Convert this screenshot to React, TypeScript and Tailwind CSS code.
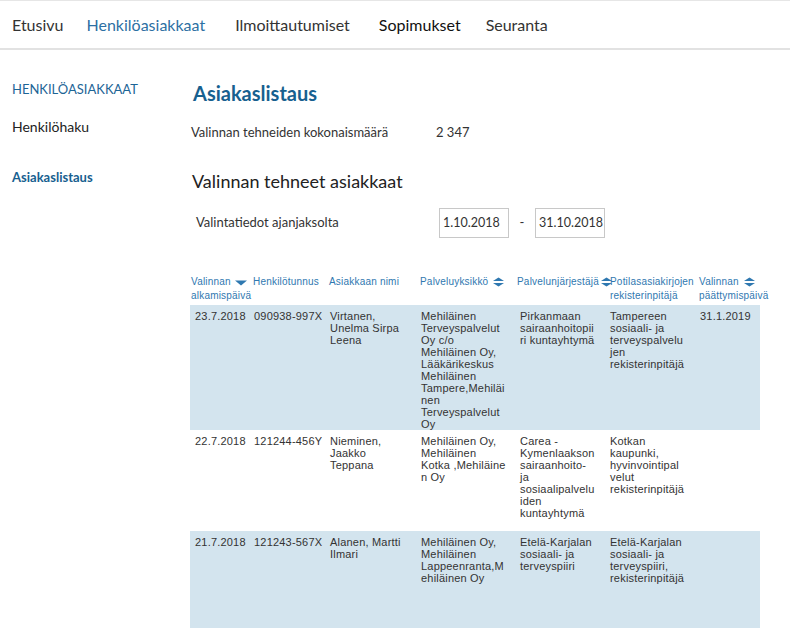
import React from "react";

const navItems = [
  { label: "Etusivu", cls: "text-[#333]" },
  { label: "Henkilöasiakkaat", cls: "ml-[23px] text-[#2d70a3]" },
  { label: "Ilmoittautumiset", cls: "ml-[30px] text-[#333]" },
  { label: "Sopimukset", cls: "ml-[29px] text-[#111]" },
  { label: "Seuranta", cls: "ml-[25px] text-[#333]" },
];

type Sort = "down" | "both" | null;

const columns: { lines: string[]; sort: Sort }[] = [
  { lines: ["Valinnan", "alkamispäivä"], sort: "down" },
  { lines: ["Henkilötunnus"], sort: null },
  { lines: ["Asiakkaan nimi"], sort: null },
  { lines: ["Palveluyksikkö"], sort: "both" },
  { lines: ["Palvelunjärjestäjä"], sort: "both" },
  { lines: ["Potilasasiakirjojen", "rekisterinpitäjä"], sort: null },
  { lines: ["Valinnan", "päättymispäivä"], sort: "both" },
];

const rows: { shade: boolean; h: string; cells: string[][] }[] = [
  {
    shade: true,
    h: "h-[125px]",
    cells: [
      ["23.7.2018"],
      ["090938-997X"],
      ["Virtanen,", "Unelma Sirpa", "Leena"],
      [
        "Mehiläinen",
        "Terveyspalvelut",
        "Oy c/o",
        "Mehiläinen Oy,",
        "Lääkärikeskus",
        "Mehiläinen",
        "Tampere,Mehiläi",
        "nen",
        "Terveyspalvelut",
        "Oy",
      ],
      ["Pirkanmaan", "sairaanhoitopii", "ri kuntayhtymä"],
      ["Tampereen", "sosiaali- ja", "terveyspalvelu", "jen", "rekisterinpitäjä"],
      ["31.1.2019"],
    ],
  },
  {
    shade: false,
    h: "h-[101px]",
    cells: [
      ["22.7.2018"],
      ["121244-456Y"],
      ["Nieminen,", "Jaakko", "Teppana"],
      ["Mehiläinen Oy,", "Mehiläinen", "Kotka ,Mehiläine", "n Oy"],
      ["Carea -", "Kymenlaakson", "sairaanhoito-", "ja", "sosiaalipalvelu", "iden", "kuntayhtymä"],
      ["Kotkan", "kaupunki,", "hyvinvointipal", "velut", "rekisterinpitäjä"],
      [],
    ],
  },
  {
    shade: true,
    h: "h-[110px]",
    cells: [
      ["21.7.2018"],
      ["121243-567X"],
      ["Alanen, Martti", "Ilmari"],
      ["Mehiläinen Oy,", "Mehiläinen", "Lappeenranta,M", "ehiläinen Oy"],
      ["Etelä-Karjalan", "sosiaali- ja", "terveyspiiri"],
      ["Etelä-Karjalan", "sosiaali- ja", "terveyspiiri,", "rekisterinpitäjä"],
      [],
    ],
  },
];

function SortIcon({ kind }: { kind: Sort }) {
  if (kind === "down") {
    return (
      <svg width="12" height="6" viewBox="0 0 12 6" className="shrink-0">
        <path d="M0 0.5 L12 0.5 L6 5.5 Z" fill="#2f78b0" />
      </svg>
    );
  }
  if (kind === "both") {
    return (
      <svg width="11" height="10" viewBox="0 0 12 10" className="shrink-0">
        <path d="M6 0 L12 4 L0 4 Z" fill="#2f78b0" />
        <path d="M0 6 L12 6 L6 10 Z" fill="#2f78b0" />
      </svg>
    );
  }
  return null;
}

const grid = "grid grid-cols-[63px_76px_91px_97px_90px_92px_61px] w-[570px]";

export default function App() {
  return (
    <div className="min-h-screen bg-white font-['Lato','Liberation_Sans',sans-serif] text-[#333]">
      <nav className="flex h-[50px] items-center border-t border-b-2 border-t-[#e6e6e6] border-b-[#e2e2e2] pl-3 text-[16px]">
        {navItems.map((n) => (
          <span key={n.label} className={n.cls}>
            {n.label}
          </span>
        ))}
      </nav>

      <div className="flex">
        <aside className="w-[190px] shrink-0 pl-3 pt-[31px]">
          <div className="text-[13px] uppercase leading-4 text-[#1d6596]">Henkilöasiakkaat</div>
          <div className="mt-[22px] text-[14px] leading-4 text-[#222]">Henkilöhaku</div>
          <div className="mt-[34px] text-[13px] font-bold leading-4 text-[#17608f]">Asiakaslistaus</div>
        </aside>

        <main className="flex-1 pt-[31px]">
          <h1 className="pl-[3px] text-[20px] font-bold leading-6 text-[#17608f]">Asiakaslistaus</h1>
          <div className="mt-[19px] flex text-[13px] leading-4 text-[#333]">
            <span className="w-[246px] pl-[1px]">Valinnan tehneiden kokonaismäärä</span>
            <span>2 347</span>
          </div>
          <h2 className="mt-[29px] pl-[2px] text-[18px] leading-6 text-[#222]">Valinnan tehneet asiakkaat</h2>
          <div className="mt-[15px] flex items-center text-[13px]">
            <span className="w-[249px] pl-[6px]">Valintatiedot ajanjaksolta</span>
            <div className="flex h-[30px] w-[70px] items-center border border-[#c8c8c8] pl-[3px] text-[12.5px]">1.10.2018</div>
            <span className="w-[26px] text-center">-</span>
            <div className="flex h-[30px] w-[70px] items-center border border-[#c8c8c8] pl-[3px] text-[12.5px]">31.10.2018</div>
          </div>

          <div className="mt-[37px] font-['Liberation_Sans',sans-serif]">
            <div className={`${grid} h-[30px] text-[10px] leading-[14px] tracking-[0.2px] text-[#2f78b0]`}>
              {columns.map((c, i) => (
                <div key={i} className={`whitespace-nowrap ${i === 0 ? "pl-[1px]" : i === 5 ? "pl-[3px]" : ""}`}>
                  <div className="flex items-center gap-[2px]">
                    <span>{c.lines[0]}</span>
                    {c.sort && (
                      <span className={c.sort === "down" ? "pl-[2px] pt-[2px]" : i === 4 ? "" : "pl-[3px]"}>
                        <SortIcon kind={c.sort} />
                      </span>
                    )}
                  </div>
                  {c.lines[1] && <div>{c.lines[1]}</div>}
                </div>
              ))}
            </div>
            {rows.map((r, ri) => (
              <div
                key={ri}
                className={`${grid} ${r.h} ${r.shade ? "bg-[#d3e4ee]" : "bg-white"} pt-[5px] text-[11px] leading-[12px] tracking-[0.2px] text-[#333]`}
              >
                {r.cells.map((c, ci) => (
                  <div key={ci} className={ci === 0 ? "pl-[5px]" : ci === 4 || ci === 5 ? "pl-[3px]" : "pl-[1px]"}>
                    {c.map((l, li) => (
                      <div key={li} className="whitespace-nowrap">
                        {l}
                      </div>
                    ))}
                  </div>
                ))}
              </div>
            ))}
          </div>
        </main>
      </div>
    </div>
  );
}
